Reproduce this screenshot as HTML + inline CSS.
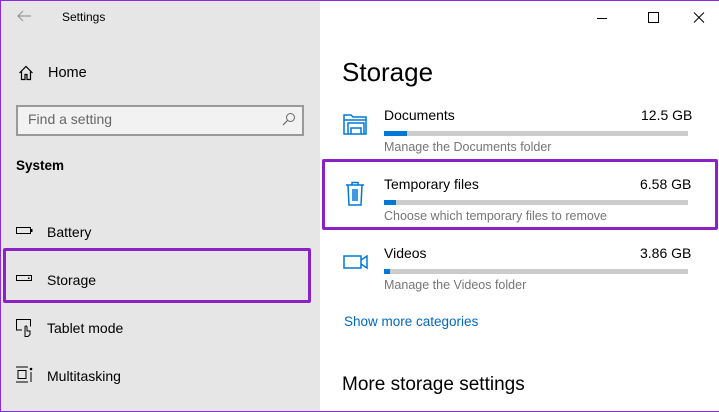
<!DOCTYPE html>
<html><head><style>
*{margin:0;padding:0;box-sizing:border-box}
body{width:719px;height:412px;overflow:hidden;font-family:"Liberation Sans",sans-serif;position:relative;background:#fff}
.frame{position:absolute;left:0;top:0;width:719px;height:412px;border:1px solid #8a2be2;border-right:none;pointer-events:none}
.left{position:absolute;left:0;top:0;width:320px;height:412px;background:#e6e6e6}
.t{position:absolute;white-space:nowrap}
.box{position:absolute;border:3px solid #8b22c4;border-radius:2px}
.bar{position:absolute;left:384px;width:304px;height:5px;background:#ccc}
.bar i{display:block;height:5px;background:#0078d7}
.sub{font-size:12.5px;color:#767676}
.nm{font-size:14px;color:#000}
</style></head><body>
<div class="left">
<svg class="t" style="left:16px;top:9px" width="16" height="14"><path d="M15 7H2M7 2L2 7l5 5" stroke="#999" fill="none" stroke-width="1.2"/></svg>
<div class="t" style="left:62px;top:10px;font-size:12px;color:#000">Settings</div>
<svg class="t" style="left:18px;top:65px" width="16" height="16"><path d="M1.5 8L8 1.5 14.5 8M3.5 6.5V14.5h3.5v-5h2v5h3.5V6.5" stroke="#000" fill="none" stroke-width="1.2"/></svg>
<div class="t" style="left:48px;top:65px;font-size:14.5px;color:#000">Home</div>
<div class="t" style="left:16px;top:105px;width:288px;height:31px;border:2px solid #999;background:#f2f2f2"></div>
<div class="t" style="left:28px;top:111px;font-size:14px;color:#666">Find a setting</div>
<svg class="t" style="left:282px;top:112px" width="14" height="14"><circle cx="8.5" cy="5.5" r="4" stroke="#666" fill="none" stroke-width="1"/><path d="M5.5 8.5L1 13" stroke="#666" stroke-width="1.2"/></svg>
<div class="t" style="left:16px;top:158px;font-size:13.5px;font-weight:bold;color:#000">System</div>
<svg class="t" style="left:16px;top:226px" width="18" height="10"><rect x="0.5" y="1.5" width="14" height="6" stroke="#000" fill="none"/><rect x="15" y="3" width="1.5" height="3" fill="#000"/></svg>
<div class="t" style="left:47px;top:224px;font-size:14px;color:#000">Battery</div>
<svg class="t" style="left:16px;top:274px" width="18" height="10"><rect x="0.5" y="1.5" width="15" height="5" stroke="#000" fill="none"/><rect x="12" y="3.5" width="1.5" height="1.5" fill="#000"/></svg>
<div class="t" style="left:47px;top:272px;font-size:14px;color:#000">Storage</div>
<svg class="t" style="left:16px;top:319px" width="18" height="18"><path d="M6 11H0.5V0.5h14v7" stroke="#000" fill="none"/><path d="M9 15V8a1 1 0 012 0v4h3v3.5l-2 2H9z" stroke="#000" fill="none"/></svg>
<div class="t" style="left:47px;top:320px;font-size:14px;color:#000">Tablet mode</div>
<svg class="t" style="left:16px;top:366px" width="18" height="18"><path d="M0 1h12M0 16h12M2 4.5h8v8H2z" stroke="#000" fill="none"/><circle cx="15" cy="3" r="1.3" fill="#000"/><path d="M15 6v10" stroke="#000"/></svg>
<div class="t" style="left:47px;top:368px;font-size:14px;color:#000">Multitasking</div>
</div>
<svg class="t" style="left:597px;top:12px" width="110" height="12"><path d="M0 6.5h10" stroke="#000"/><rect x="51.5" y="0.5" width="10" height="10" stroke="#000" fill="none"/><path d="M97 0.5l10 10M107 0.5l-10 10" stroke="#000"/></svg>
<div class="t" style="left:342px;top:57px;font-size:26px;color:#000">Storage</div>
<svg class="t" style="left:343px;top:112px" width="26" height="24"><path d="M1 22V3h7l2 2h13v17z" stroke="#0078d7" fill="none" stroke-width="1.5"/><path d="M5 22V11h16v11M8 22v-6h10v6" stroke="#0078d7" fill="none" stroke-width="1.5"/><path d="M1 8h22" stroke="#0078d7" stroke-width="1.5"/></svg>
<div class="t nm" style="left:384px;top:107px">Documents</div>
<div class="t nm" style="left:641px;top:107px">12.5 GB</div>
<div class="bar" style="top:131px"><i style="width:23px"></i></div>
<div class="t sub" style="left:384px;top:140px">Manage the Documents folder</div>
<svg class="t" style="left:345px;top:181px" width="20" height="26"><path d="M1 4h18M7 4V1.5h6V4M3 4l1 20h12l1-20M8 8v12M10 8v12M12 8v12" stroke="#0078d7" fill="none" stroke-width="1.5"/></svg>
<div class="t nm" style="left:384px;top:176px">Temporary files</div>
<div class="t nm" style="left:640px;top:176px">6.58 GB</div>
<div class="bar" style="top:200px"><i style="width:12px"></i></div>
<div class="t sub" style="left:384px;top:209px">Choose which temporary files to remove</div>
<svg class="t" style="left:343px;top:254px" width="26" height="16"><rect x="1" y="2" width="17" height="12" stroke="#0078d7" fill="none" stroke-width="1.5"/><path d="M18 6l6-4v12l-6-4" stroke="#0078d7" fill="none" stroke-width="1.5"/></svg>
<div class="t nm" style="left:384px;top:245px">Videos</div>
<div class="t nm" style="left:640px;top:245px">3.86 GB</div>
<div class="bar" style="top:269px"><i style="width:6px"></i></div>
<div class="t sub" style="left:384px;top:278px">Manage the Videos folder</div>
<div class="t" style="left:344px;top:314px;font-size:13.5px;color:#0067c0">Show more categories</div>
<div class="t" style="left:342px;top:374px;font-size:19px;color:#000">More storage settings</div>
<div class="box" style="left:3px;top:248px;width:308px;height:55px"></div>
<div class="box" style="left:322px;top:159px;width:396px;height:71px"></div>
<div class="frame"></div>
</body></html>
